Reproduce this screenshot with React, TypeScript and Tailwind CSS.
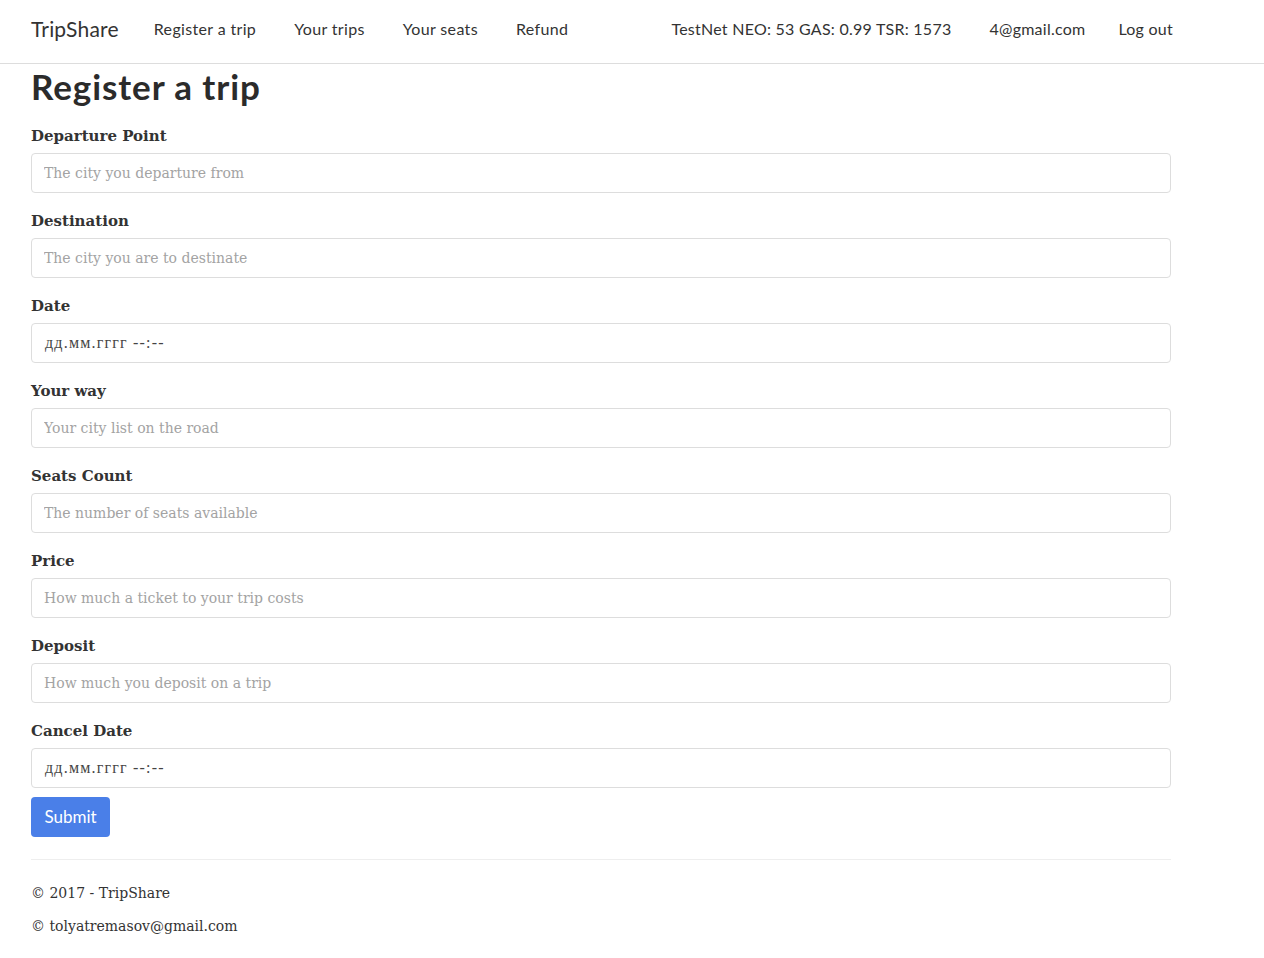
const fields = [
  { label: "Departure Point", placeholder: "The city you departure from" },
  { label: "Destination", placeholder: "The city you are to destinate" },
  { label: "Date", date: true },
  { label: "Your way", placeholder: "Your city list on the road" },
  { label: "Seats Count", placeholder: "The number of seats available" },
  { label: "Price", placeholder: "How much a ticket to your trip costs" },
  { label: "Deposit", placeholder: "How much you deposit on a trip" },
  { label: "Cancel Date", date: true },
];

const sans = "font-['Lato','Open_Sans',sans-serif]";
const serif = "font-['DejaVu_Serif','Liberation_Serif',serif]";

function DateBox() {
  return (
    <div className="h-10 rounded border border-[#dddddd] bg-white pl-[13px] flex items-center">
      <span className="font-['Liberation_Serif',serif] text-[16px] tracking-[1.2px] text-[#444]">дд.мм.гггг --:--</span>
    </div>
  );
}

export default function App() {
  return (
    <div className="min-h-screen bg-white text-[#333333]">
      <nav className="h-16 border-b border-[#dddddd] bg-white">
        <div className={`ml-4 w-[1170px] px-[15px] h-[57px] flex items-center ${sans}`}>
          <span className="text-[21px] text-[#333] tracking-[0.2px] mr-[35px]">TripShare</span>
          <div className="flex items-center gap-[38px] text-[16px] tracking-[0.35px] text-[#333]">
            <span>Register a trip</span>
            <span>Your trips</span>
            <span>Your seats</span>
            <span>Refund</span>
          </div>
          <div className="ml-auto flex items-center text-[16px] tracking-[0.25px] text-[#333]">
            <span className="mr-[38px]">TestNet NEO: 53 GAS: 0.99 TSR: 1573</span>
            <span className="mr-[33px]">4@gmail.com</span>
            <span className="mr-[-2px]">Log out</span>
          </div>
        </div>
      </nav>

      <main className="ml-4 w-[1170px] px-[15px]">
        <h1 className={`${sans} font-bold text-[35px] leading-[44px] text-[#2b2b2b] tracking-[0.9px]`}>Register a trip</h1>

        <form className="mt-[17px]">
          {fields.map((f, i) => (
            <div key={f.label} className={i === fields.length - 1 ? "mb-[9px]" : "mb-[17px]"}>
              <label className={`${serif} block font-bold text-[15px] leading-[23px] mb-[5px] text-[#333]`}>{f.label}</label>
              {f.date ? (
                <DateBox />
              ) : (
                <input
                  type="text"
                  placeholder={f.placeholder}
                  className={`${serif} w-full h-10 rounded border border-[#dddddd] px-3 text-[14px] text-[#555] placeholder:text-[#a3a3a3] outline-none`}
                />
              )}
            </div>
          ))}
          <button
            type="button"
            className={`${sans} h-10 w-[79px] rounded bg-[#4a7fe8] text-white text-[17px]`}
          >
            Submit
          </button>
        </form>

        <hr className="mt-[22px] border-t border-[#eeeeee]" />

        <footer className={`${serif} text-[14px] text-[#333] pt-[22px]`}>
          <p className="leading-[23px] mb-[10px]">© 2017 - TripShare</p>
          <p className="leading-[23px]">© tolyatremasov@gmail.com</p>
        </footer>
      </main>
    </div>
  );
}
